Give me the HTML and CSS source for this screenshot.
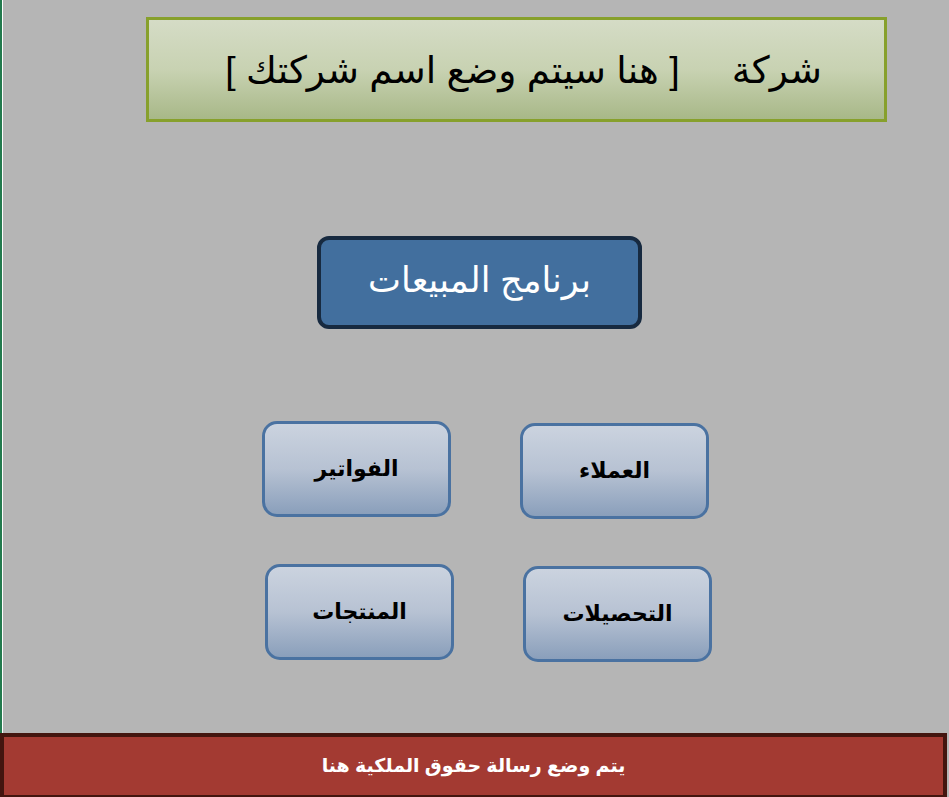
FILE: index.html
```html
<!DOCTYPE html>
<html lang="ar">
<head>
<meta charset="utf-8">
<title>برنامج المبيعات</title>
<link rel="stylesheet" href="styles.css">
</head>
<body>
<div class="page">
  <div class="canvas">
    <div class="inner">
      <div class="company">
        <span class="company-text">شركة&nbsp;&nbsp;&nbsp;&nbsp; [ هنا سيتم وضع اسم شركتك ]</span>
      </div>
      <div class="title-btn">برنامج المبيعات</div>
      <div class="row row1">
        <div class="btn">الفواتير</div>
        <div class="btn btn-low">العملاء</div>
      </div>
      <div class="row row2">
        <div class="btn">المنتجات</div>
        <div class="btn btn-low">التحصيلات</div>
      </div>
    </div>
  </div>
  <div class="footer">يتم وضع رسالة حقوق الملكية هنا</div>
</div>
</body>
</html>
```
FILE: styles.css
```css
html, body {
  margin: 0;
  padding: 0;
}
body {
  background: #b5b5b5;
  font-family: "Liberation Sans", "DejaVu Sans", sans-serif;
  width: 949px;
  height: 797px;
  overflow: hidden;
}
.page {
  width: 949px;
  height: 797px;
  display: flex;
  flex-direction: column;
}
.canvas {
  height: 733px;
  border-left: 2px solid #237a4e;
  box-sizing: border-box;
}
.inner {
  height: 100%;
  border-left: 1px solid #ffffff;
  box-sizing: border-box;
  display: flex;
  flex-direction: column;
  padding-top: 17px;
}
.company {
  margin-left: 143px;
  width: 741px;
  height: 105px;
  box-sizing: border-box;
  border: 3px solid #87a02c;
  background: linear-gradient(to bottom, #d5dcc6 0%, #c8d2b2 50%, #a8b888 100%);
  display: flex;
  align-items: center;
  justify-content: center;
  direction: rtl;
  padding-left: 14px;
}
.company-text {
  font-size: 37.5px;
  color: #000;
  line-height: 1;
  padding-top: 2px;
}
.title-btn {
  margin-top: 114px;
  margin-left: 314px;
  width: 325px;
  height: 93px;
  box-sizing: border-box;
  border: 4px solid #172a40;
  border-radius: 12px;
  background: #426f9e;
  color: #fff;
  font-size: 35px;
  display: flex;
  align-items: center;
  justify-content: center;
  direction: rtl;
  padding-bottom: 6px;
}
.row {
  display: flex;
  align-items: flex-start;
  gap: 69px;
}
.row1 {
  margin-top: 92px;
  margin-left: 259px;
}
.row2 {
  margin-top: 45px;
  margin-left: 262px;
}
.btn {
  width: 189px;
  height: 96px;
  box-sizing: border-box;
  border: 3px solid #4a72a1;
  border-radius: 15px;
  background: linear-gradient(to bottom, #cbd3df 0%, #b7c2d3 50%, #8a9fbb 100%);
  color: #000;
  font-weight: bold;
  font-size: 22px;
  display: flex;
  align-items: center;
  justify-content: center;
  direction: rtl;
}
.btn-low {
  margin-top: 2px;
}
.footer {
  width: 947px;
  height: 64px;
  box-sizing: border-box;
  border: 4px solid #43150f;
  border-bottom-width: 2px;
  background: #a33a32;
  color: #fff;
  font-weight: bold;
  font-size: 19px;
  display: flex;
  align-items: center;
  justify-content: center;
  direction: rtl;
  padding-bottom: 2px;
}
```
